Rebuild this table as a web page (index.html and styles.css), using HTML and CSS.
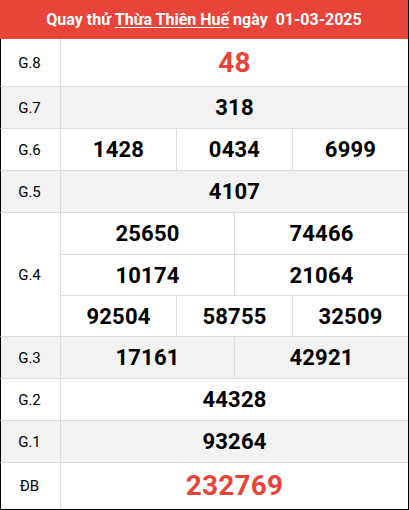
FILE: index.html
```html
<!DOCTYPE html>
<html lang="vi">
<head>
<meta charset="utf-8">
<title>Quay thử Thừa Thiên Huế</title>
<link rel="stylesheet" href="styles.css">
</head>
<body>
<div class="board">
  <div class="head">Quay thử <span class="link">Thừa Thiên Huế</span> ngày&nbsp; 01-03-2025</div>
  <div class="row tall">
    <div class="label">G.8</div>
    <div class="vals"><div class="line"><span class="num red big">48</span></div></div>
  </div>
  <div class="row alt">
    <div class="label">G.7</div>
    <div class="vals"><div class="line"><span class="num">318</span></div></div>
  </div>
  <div class="row">
    <div class="label">G.6</div>
    <div class="vals"><div class="line"><span class="num">1428</span><span class="num">0434</span><span class="num">6999</span></div></div>
  </div>
  <div class="row alt">
    <div class="label">G.5</div>
    <div class="vals"><div class="line"><span class="num">4107</span></div></div>
  </div>
  <div class="row">
    <div class="label">G.4</div>
    <div class="vals">
      <div class="line"><span class="num">25650</span><span class="num">74466</span></div>
      <div class="line"><span class="num">10174</span><span class="num">21064</span></div>
      <div class="line"><span class="num">92504</span><span class="num">58755</span><span class="num">32509</span></div>
    </div>
  </div>
  <div class="row alt">
    <div class="label">G.3</div>
    <div class="vals"><div class="line"><span class="num">17161</span><span class="num">42921</span></div></div>
  </div>
  <div class="row">
    <div class="label">G.2</div>
    <div class="vals"><div class="line"><span class="num">44328</span></div></div>
  </div>
  <div class="row alt">
    <div class="label">G.1</div>
    <div class="vals"><div class="line"><span class="num">93264</span></div></div>
  </div>
  <div class="row last">
    <div class="label">ĐB</div>
    <div class="vals"><div class="line"><span class="num red huge">232769</span></div></div>
  </div>
</div>
</body>
</html>
```
FILE: styles.css
```css
* { box-sizing: border-box; }
html, body { margin: 0; padding: 0; background: #fff; }
body { font-family: Roboto, "Noto Sans", sans-serif; color: #000; }

.board {
  width: 409px;
  height: 510px;
  border-right: 1px solid #000;
  border-bottom: 1px solid #000;
  display: flex;
  flex-direction: column;
}

.head {
  height: 39px;
  background: #e9443a;
  color: #fff;
  font-weight: 700;
  font-size: 16px;
  display: flex;
  align-items: center;
  justify-content: center;
  white-space: pre;
}
.head .link { text-decoration: underline; text-underline-offset: 2px; }

.row {
  display: flex;
  border-left: 1px solid #000;
  border-bottom: 1px solid #dddddd;
}
.row.alt { background: #f2f2f2; }
.row.last { border-bottom: none; flex: 1; }

.label {
  width: 60px;
  flex: none;
  border-right: 1px solid #dddddd;
  display: flex;
  align-items: center;
  justify-content: center;
  font-size: 15px;
  padding-right: 2px;
}

.vals { flex: 1; display: flex; flex-direction: column; }
.line {
  height: 41px;
  display: flex;
}
.line + .line { border-top: 1px solid #dddddd; }
.row.tall .line { height: 47px; }
.row.last .line { height: 44px; }

.num {
  flex: 1;
  display: flex;
  align-items: center;
  justify-content: center;
  font-weight: 700;
  font-size: 22px;
  letter-spacing: 0.2px;
}
.num + .num { border-left: 1px solid #dddddd; }
.num.red { color: #e9443a; }
.num.big { font-size: 28px; }
.num.huge { font-size: 28px; }
```
